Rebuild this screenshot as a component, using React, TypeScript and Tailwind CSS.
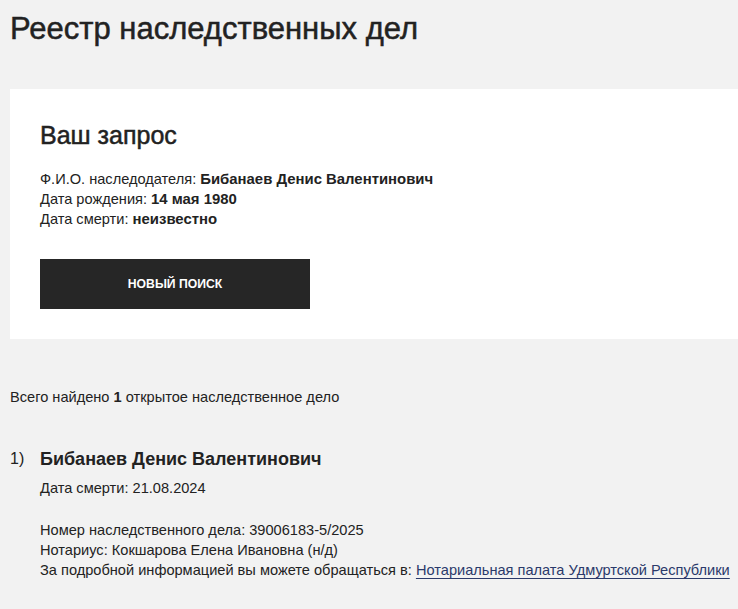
import React from "react";

export default function App() {
  return (
    <div className="min-h-[609px] w-[738px] bg-[#f2f2f2] text-[#222222] overflow-hidden" style={{ fontFamily: '"Liberation Sans", Arial, sans-serif' }}>
      <div className="pl-[10px] pt-[10px]">
        <h1 className="text-[31px] leading-[38px] font-normal text-[#222222] [-webkit-text-stroke:0.5px_#222222]">Реестр наследственных дел</h1>
      </div>
      <div className="ml-[10px] mt-[41px] bg-white pl-[30px] pt-[30px] pb-[30px]">
        <h2 className="text-[25px] leading-[32px] font-normal [-webkit-text-stroke:0.5px_#222222]">Ваш запрос</h2>
        <div className="mt-[18px] text-[14.6px] leading-[20px]">
          <div>
            Ф.И.О. наследодателя: <b className="text-[14.9px]">Бибанаев Денис Валентинович</b>
          </div>
          <div>
            Дата рождения: <b className="text-[14.9px]">14 мая 1980</b>
          </div>
          <div>
            Дата смерти: <b className="text-[14.9px]">неизвестно</b>
          </div>
        </div>
        <button className="mt-[30px] flex h-[50px] w-[270px] items-center justify-center bg-[#262626] text-[12.2px] font-bold uppercase text-white">
          Новый поиск
        </button>
      </div>
      <div className="pl-[10px] pt-[48px] text-[14.6px] leading-[20px]">
        Всего найдено <b>1</b> открытое наследственное дело
      </div>
      <div className="mt-[40px] flex pl-[10px]">
        <div className="w-[30px] text-[16px] leading-[24px]">1)</div>
        <div>
          <div className="text-[18px] leading-[24px] font-bold">Бибанаев Денис Валентинович</div>
          <div className="mt-[7px] text-[14.6px] leading-[20px]">Дата смерти: 21.08.2024</div>
          <div className="mt-[22px] text-[14.6px] leading-[20px]">
            <div>Номер наследственного дела: 39006183-5/2025</div>
            <div>Нотариус: Кокшарова Елена Ивановна (н/д)</div>
            <div className="whitespace-nowrap">
              За подробной информацией вы можете обращаться в:{" "}
              <a href="#" className="text-[#2b3a6b] underline decoration-[#2b3a6b] underline-offset-[3px]">
                Нотариальная палата Удмуртской Республики
              </a>
            </div>
          </div>
        </div>
      </div>
    </div>
  );
}
